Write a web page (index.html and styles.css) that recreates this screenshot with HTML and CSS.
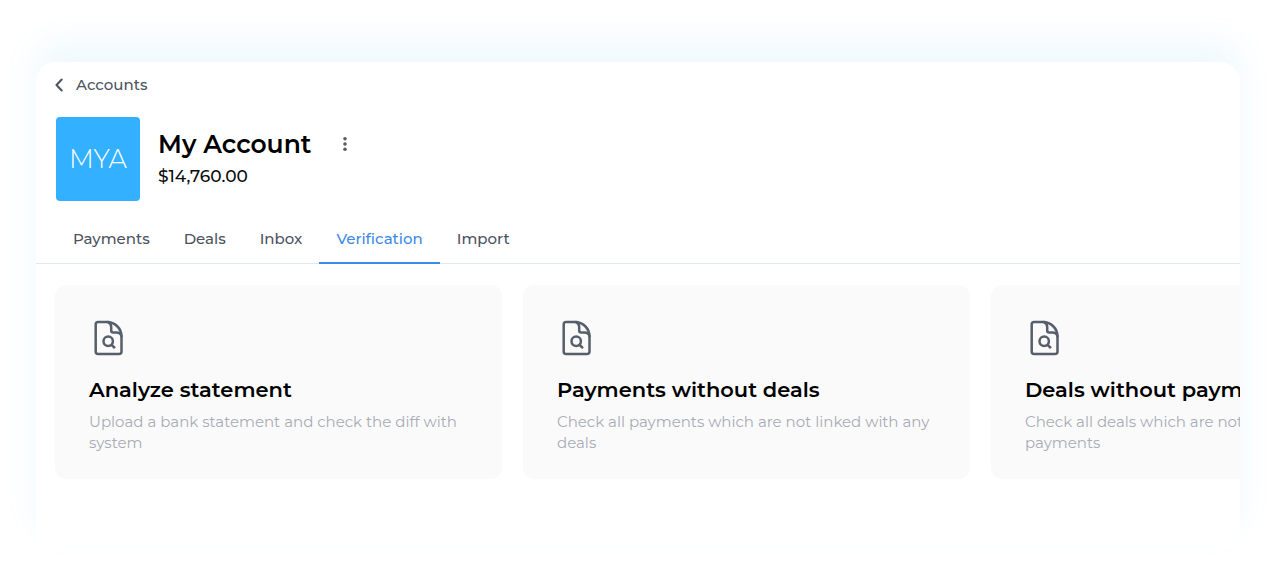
FILE: index.html
```html
<!DOCTYPE html>
<html lang="en">
<head>
<meta charset="utf-8">
<meta name="viewport" content="width=device-width, initial-scale=1">
<title>My Account</title>
<link rel="stylesheet" href="styles.css">
</head>
<body>
<svg class="sprite" aria-hidden="true">
  <symbol id="file-search" viewBox="0 0 30 36">
    <g fill="none" stroke="currentColor" stroke-width="2.500" stroke-linecap="round" stroke-linejoin="round">
      <path d="M4 2H13C21 2 27.500 8.500 27.500 16.500V31.500Q27.500 34 25 34H4Q1.700 34 1.700 31.500V4.500Q1.700 2 4 2Z"/>
      <path d="M14 2Q17.200 3.500 17.200 7V10.500Q17.200 12.500 19.200 12.500H22.500Q26.500 12.500 27.500 16"/>
      <circle cx="14.200" cy="21.300" r="4.700"/>
      <path d="M17.500 24.800L20.300 27.500"/>
    </g>
  </symbol>
</svg>
<main class="panel">
  <a class="back" href="#">
    <svg class="back-icon" viewBox="0 0 8 14" aria-hidden="true"><path d="M6.700 1.500L1.500 7L6.700 12.500" fill="none" stroke="currentColor" stroke-width="2" stroke-linecap="round" stroke-linejoin="round"/></svg>
    Accounts
  </a>
  <header class="account">
    <div class="avatar">MYA</div>
    <div class="summary">
      <div class="title-row">
        <h1 class="title">My Account</h1>
        <button class="more" type="button" aria-label="More actions">
          <svg class="more-icon" viewBox="0 0 4 16" aria-hidden="true"><g fill="currentColor"><circle cx="2" cy="2.700" r="1.800"/><circle cx="2" cy="8" r="1.800"/><circle cx="2" cy="13.300" r="1.800"/></g></svg>
        </button>
      </div>
      <p class="balance">$14,760.00</p>
    </div>
  </header>
  <nav class="tabs" aria-label="Account sections">
    <a class="tab" href="#">Payments</a>
    <a class="tab" href="#">Deals</a>
    <a class="tab" href="#">Inbox</a>
    <a class="tab tab-active" href="#" aria-current="page">Verification</a>
    <a class="tab" href="#">Import</a>
  </nav>
  <section class="cards">
    <article class="card">
      <svg class="card-icon" aria-hidden="true"><use href="#file-search"/></svg>
      <h2 class="card-title">Analyze statement</h2>
      <p class="card-text">Upload a bank statement and check the diff with system</p>
    </article>
    <article class="card">
      <svg class="card-icon" aria-hidden="true"><use href="#file-search"/></svg>
      <h2 class="card-title">Payments without deals</h2>
      <p class="card-text">Check all payments which are not linked with any deals</p>
    </article>
    <article class="card">
      <svg class="card-icon" aria-hidden="true"><use href="#file-search"/></svg>
      <h2 class="card-title">Deals without payments</h2>
      <p class="card-text">Check all deals which are not linked with any payments</p>
    </article>
  </section>
</main>
</body>
</html>
```

FILE: styles.css
```css
* {
  box-sizing: border-box;
}

body {
  margin: 0;
  padding: 62px 36px 12px;
  min-height: 100vh;
  display: flex;
  background: #fff;
  color: #0b0c0e;
  font-family: Montserrat, Inter, sans-serif;
}

h1, h2, p {
  margin: 0;
}

.sprite {
  position: absolute;
  width: 0;
  height: 0;
}

.panel {
  flex: 1;
  min-width: 0;
  overflow: hidden;
  background: #fff;
  border-radius: 20px;
  box-shadow: 0 -20px 32px rgba(80, 190, 240, 0.09);
}

.back {
  display: inline-flex;
  align-items: center;
  gap: 13px;
  margin: 13px 19px 0;
  color: #4d5360;
  font-size: 15px;
  font-weight: 500;
  line-height: 20px;
  text-decoration: none;
}

.back-icon {
  width: 8px;
  height: 14px;
}

.account {
  display: flex;
  align-items: center;
  gap: 18px;
  margin: 21px 20px 0;
}

.avatar {
  display: flex;
  align-items: center;
  justify-content: center;
  width: 84px;
  height: 84px;
  border-radius: 4px;
  background: #33b0ff;
  color: #fff;
  font-size: 26px;
  font-weight: 300;
}

.title-row {
  display: flex;
  align-items: center;
  gap: 24px;
}

.title {
  color: #000;
  font-size: 25px;
  font-weight: 600;
  line-height: 32px;
}

.more {
  display: flex;
  justify-content: center;
  width: 20px;
  padding: 4px 0;
  border: 0;
  background: none;
  color: #565c69;
}

.more-icon {
  width: 4px;
  height: 16px;
}

.balance {
  margin: 4px 0 2px;
  font-size: 17px;
  font-weight: 500;
  line-height: 24px;
}

.tabs {
  display: flex;
  margin-top: 13px;
  padding-left: 20px;
  box-shadow: inset 0 -1px #e0e8f0;
}

.tab {
  padding: 15px 17px 13px;
  border-bottom: 2px solid transparent;
  color: #4d5360;
  font-size: 15px;
  font-weight: 500;
  line-height: 20px;
  text-decoration: none;
}

.tab-active {
  border-color: #3d8ae6;
  color: #3d8ae6;
}

.cards {
  display: flex;
  gap: 21px;
  padding: 21px 19px;
}

.card {
  flex: 0 0 447px;
  padding: 35px 34px 26px;
  border-radius: 11px;
  background: #fafafa;
}

.card-icon {
  display: block;
  width: 30px;
  height: 36px;
  margin-left: 5px;
  color: #565f6b;
}

.card-title {
  margin-top: 20px;
  color: #000;
  font-size: 21px;
  font-weight: 600;
  line-height: 28px;
}

.card-text {
  margin-top: 7px;
  color: #a8acb6;
  font-size: 15px;
  line-height: 21px;
}
```
